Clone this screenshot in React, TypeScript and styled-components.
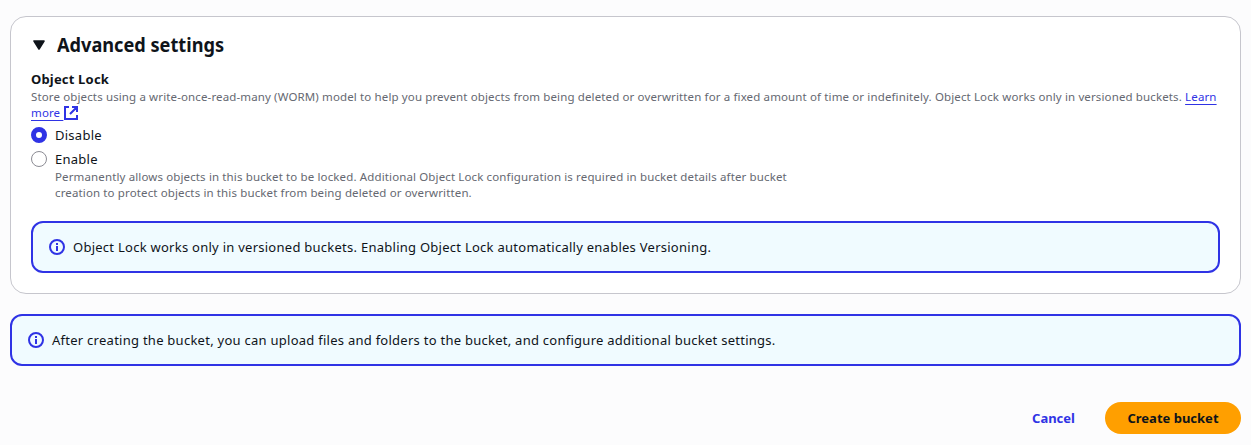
import React from "react";
import styled, { createGlobalStyle } from "styled-components";

const Global = createGlobalStyle`
  *, *::before, *::after { box-sizing: border-box; }
  body {
    margin: 0;
    background: #fcfcfd;
    color: #0f141a;
    font-family: "Noto Sans", "Open Sans", sans-serif;
    font-size: 13px;
    line-height: 20px;
  }
`;

const Page = styled.main`
  display: flex;
  flex-direction: column;
  padding: 16px 10px 11px;
`;

const Card = styled.section`
  padding: 16px 20px 20px;
  background: #fff;
  border: 1px solid #c6c6cd;
  border-radius: 16px;
`;

const CardHeader = styled.header`
  display: flex;
  align-items: center;
  gap: 10px;
  height: 24px;
  margin-bottom: 12px;
`;

const Title = styled.h2`
  margin: 0;
  font-size: 20px;
  line-height: 24px;
  font-weight: 700;
  transform: scaleX(0.908);
  transform-origin: left center;
  white-space: nowrap;
`;

const FieldLabel = styled.div`
  font-weight: 700;
  letter-spacing: 0.18px;
`;

const Description = styled.p<{ $width?: number }>`
  margin: 0;
  max-width: ${(p) => (p.$width ? `${p.$width}px` : "none")};
  color: #656871;
  font-size: 11.5px;
  line-height: 16px;
  letter-spacing: 0.13px;
`;

const Link = styled.a`
  color: #2f33e5;
  text-decoration: underline;
  text-decoration-thickness: 1px;
  text-underline-offset: 3px;
  svg { vertical-align: top; }
`;

const Options = styled.div`
  display: flex;
  flex-direction: column;
  gap: 4px;
  margin: 4px 0 20px;
`;

const Option = styled.label`
  display: grid;
  grid-template-columns: 16px 1fr;
  column-gap: 8px;
`;

const OptionLabel = styled.div`
  letter-spacing: 0.26px;
`;

const Radio = styled.span<{ $checked?: boolean }>`
  width: 16px;
  height: 16px;
  margin-top: 2px;
  border-radius: 50%;
  background: #fff;
  border: ${(p) => (p.$checked ? "5px solid #2f33e5" : "1px solid #8c8c94")};
`;

const Alert = styled.div`
  display: flex;
  align-items: center;
  gap: 8px;
  height: 52px;
  padding: 0 16px;
  border: 2px solid #2f33e5;
  border-radius: 12px;
  background: #f0fbff;
`;

const AlertText = styled.span`
  letter-spacing: 0.26px;
  white-space: nowrap;
`;

const PageAlert = styled(Alert)`
  margin-top: 20px;
`;

const Actions = styled.footer`
  display: flex;
  justify-content: flex-end;
  gap: 8px;
  margin-top: 36px;
`;

const Button = styled.button<{ $primary?: boolean }>`
  width: ${(p) => (p.$primary ? 136 : 87)}px;
  height: 32px;
  padding: 0;
  border: 0;
  border-radius: 16px;
  background: ${(p) => (p.$primary ? "#ff9f00" : "transparent")};
  color: ${(p) => (p.$primary ? "#0f141a" : "#2f33e5")};
  font: inherit;
  font-weight: 700;
  white-space: nowrap;
`;

const Caret = () => (
  <svg width="16" height="16" viewBox="0 0 16 16" aria-hidden="true">
    <path d="M3 4h10l-5 8z" fill="#0f141a" stroke="#0f141a" strokeWidth="1.6" strokeLinejoin="round" />
  </svg>
);

const ExternalIcon = () => (
  <svg width="16" height="16" viewBox="0 0 16 16" fill="none" stroke="#2f33e5" strokeWidth="2" aria-hidden="true">
    <path d="M6 2H2v12h12v-4M9 2h5v5M7 9l7-7" />
  </svg>
);

const InfoIcon = () => (
  <svg width="16" height="16" viewBox="0 0 16 16" fill="none" stroke="#2f33e5" strokeWidth="2" aria-hidden="true">
    <circle cx="8" cy="8" r="7" />
    <path d="M8 12V7M8 6V4" />
  </svg>
);

export default function App() {
  return (
    <>
      <Global />
      <Page>
        <Card>
          <CardHeader>
            <Caret />
            <Title>Advanced settings</Title>
          </CardHeader>
          <FieldLabel>Object Lock</FieldLabel>
          <Description>
            Store objects using a write-once-read-many (WORM) model to help you prevent objects from being deleted or
            overwritten for a fixed amount of time or indefinitely. Object Lock works only in versioned buckets.{" "}
            <Link>
              Learn more <ExternalIcon />
            </Link>
          </Description>
          <Options>
            <Option>
              <Radio $checked />
              <OptionLabel>Disable</OptionLabel>
            </Option>
            <Option>
              <Radio />
              <div>
                <OptionLabel>Enable</OptionLabel>
                <Description $width={740}>
                  Permanently allows objects in this bucket to be locked. Additional Object Lock configuration is
                  required in bucket details after bucket creation to protect objects in this bucket from being deleted
                  or overwritten.
                </Description>
              </div>
            </Option>
          </Options>
          <Alert>
            <InfoIcon />
            <AlertText>
              Object Lock works only in versioned buckets. Enabling Object Lock automatically enables Versioning.
            </AlertText>
          </Alert>
        </Card>
        <PageAlert>
          <InfoIcon />
          <AlertText>
            After creating the bucket, you can upload files and folders to the bucket, and configure additional bucket
            settings.
          </AlertText>
        </PageAlert>
        <Actions>
          <Button>Cancel</Button>
          <Button $primary>Create bucket</Button>
        </Actions>
      </Page>
    </>
  );
}
